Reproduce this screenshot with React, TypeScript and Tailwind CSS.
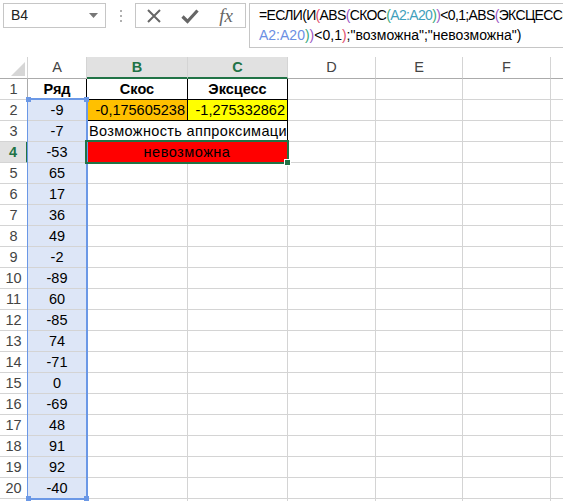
import React from "react";

const vals = [-9, -7, -53, 65, 17, 36, 49, -2, -89, 60, -85, 74, -71, 0, -69, 48, 91, 92, -40];

function RowHead({ n, active }: { n?: number; active?: boolean }) {
  return (
    <div
      className={
        "w-[28px] shrink-0 border-b border-b-[#d4d4d4] border-r text-center leading-[20px] " +
        (active
          ? "bg-[#e1e1e1] border-r-2 border-r-[#217346] text-[#217346] font-bold"
          : "border-r-[#ababab] text-[#444]")
      }
    >
      {n}
    </div>
  );
}

function Rest() {
  return (
    <>
      <div className="w-[88px] shrink-0 border-r border-b border-[#d4d4d4]" />
      <div className="w-[87px] shrink-0 border-r border-b border-[#d4d4d4]" />
      <div className="w-[88px] shrink-0 border-r border-b border-[#d4d4d4]" />
      <div className="flex-1 border-b border-[#d4d4d4]" />
    </>
  );
}

export default function App() {
  return (
    <div className="w-[563px] h-[501px] bg-white overflow-hidden relative font-['Liberation_Sans',Arial,sans-serif] text-[14.5px] text-black">
      {/* formula bar */}
      <div className="h-[57px] flex items-start pt-[3px] pl-[3px]">
        <div className="w-[103px] h-[25px] border border-[#c6c6c6] flex items-center justify-between pl-[7px] pr-[7px] text-[14px] text-[#222]">
          <span>B4</span>
          <svg width="9" height="5" viewBox="0 0 9 5">
            <path d="M0 0 L9 0 L4.5 5 Z" fill="#777" />
          </svg>
        </div>
        <div className="w-[29px] h-[25px] flex flex-col items-center justify-center gap-[3px]">
          <div className="w-[2px] h-[2px] bg-[#b0b0b0]" />
          <div className="w-[2px] h-[2px] bg-[#b0b0b0]" />
          <div className="w-[2px] h-[2px] bg-[#b0b0b0]" />
        </div>
        <div className="w-[111px] h-[25px] border border-[#c6c6c6] flex items-center">
          <div className="w-[36px] flex justify-center">
            <svg width="16" height="16" viewBox="0 0 16 16">
              <path d="M2 2 L14 14 M14 2 L2 14" stroke="#666" strokeWidth="2" />
            </svg>
          </div>
          <div className="w-[36px] flex justify-center">
            <svg width="18" height="16" viewBox="0 0 18 16">
              <path d="M1.5 8.5 L6.5 13.5 L16.5 2.5" stroke="#666" strokeWidth="3.2" fill="none" />
            </svg>
          </div>
          <div className="w-[36px] flex justify-center font-['Liberation_Serif',serif] italic text-[19px] text-[#666] leading-none">
            fx
          </div>
        </div>
        <div className="ml-[3px] flex-1 h-[45px] border border-r-0 border-[#c6c6c6] pl-[9px] pt-[1px] text-[14px] leading-[20px] whitespace-nowrap overflow-hidden">
          <div className="tracking-[-0.65px]">
            =ЕСЛИ(И<span className="text-[#e0506e]">(</span>ABS<span className="text-[#9b59c4]">(</span>СКОС
            <span className="text-[#3aa97a]">(</span>
            <span className="text-[#3f9fbc]">A2:A20</span>
            <span className="text-[#3aa97a]">)</span>
            <span className="text-[#9b59c4]">)</span>&lt;0,1;ABS<span className="text-[#9b59c4]">(</span>ЭКСЦЕСС
            <span className="text-[#3aa97a]">(</span>
          </div>
          <div>
            <span className="text-[#6b8fe3]">A2:A20</span>
            <span className="text-[#3aa97a]">)</span>
            <span className="text-[#9b59c4]">)</span>&lt;0,1<span className="text-[#e0506e]">)</span>;"возможна";"невозможна")
          </div>
        </div>
      </div>

      {/* column headers */}
      <div className="flex h-[22px] text-[#444]">
        <div className="w-[28px] shrink-0 border-r border-r-[#d4d4d4] border-b border-b-[#ababab] relative">
          <svg className="absolute right-[2px] bottom-[2px]" width="14" height="14" viewBox="0 0 14 14">
            <path d="M14 0 L14 14 L0 14 Z" fill="#d6d6d6" />
          </svg>
        </div>
        <div className="w-[59px] shrink-0 border-r border-r-[#d4d4d4] border-b border-b-[#ababab] text-center leading-[21px]">A</div>
        <div className="w-[101px] shrink-0 border-r border-r-[#d4d4d4] border-b-2 border-b-[#217346] bg-[#e1e1e1] text-center leading-[20px] text-[#217346] font-bold">B</div>
        <div className="w-[100px] shrink-0 border-r border-r-[#d4d4d4] border-b-2 border-b-[#217346] bg-[#e1e1e1] text-center leading-[20px] text-[#217346] font-bold">C</div>
        <div className="w-[88px] shrink-0 border-r border-r-[#d4d4d4] border-b border-b-[#ababab] text-center leading-[21px]">D</div>
        <div className="w-[87px] shrink-0 border-r border-r-[#d4d4d4] border-b border-b-[#ababab] text-center leading-[21px]">E</div>
        <div className="w-[88px] shrink-0 border-r border-r-[#d4d4d4] border-b border-b-[#ababab] text-center leading-[21px]">F</div>
        <div className="flex-1 border-b border-b-[#ababab]" />
      </div>

      {/* row 1 */}
      <div className="flex h-[21px]">
        <RowHead n={1} />
        <div className="w-[59px] shrink-0 border-r border-r-black border-b border-b-[#d4d4d4] text-center leading-[20px] font-bold">Ряд</div>
        <div className="w-[101px] shrink-0 border-r border-b border-black text-center leading-[20px] font-bold">Скос</div>
        <div className="w-[100px] shrink-0 border-r border-b border-black text-center leading-[20px] font-bold">Эксцесс</div>
        <Rest />
      </div>

      {/* rows 2..20 */}
      {vals.map((v, i) => {
        const r = i + 2;
        return (
          <div key={r} className="flex h-[21px]">
            <RowHead n={r} active={r === 4} />
            <div className="w-[59px] shrink-0 border-r border-b border-[#d4d4d4] bg-[#dde6f7] text-center leading-[20px]">{v}</div>
            {r === 2 ? (
              <>
                <div className="w-[101px] shrink-0 border-r border-b border-black bg-[#ffc000] text-right pr-[2px] leading-[20px]">-0,175605238</div>
                <div className="w-[100px] shrink-0 border-r border-b border-black bg-[#ffff00] text-right pr-[2px] leading-[20px]">-1,275332862</div>
              </>
            ) : r === 3 ? (
              <div className="w-[201px] shrink-0 border-r border-r-black border-b border-b-[#d4d4d4] pl-[2px] leading-[20px] whitespace-nowrap overflow-hidden tracking-[0.35px]">
                Возможность аппроксимации
              </div>
            ) : r === 4 ? (
              <div className="w-[201px] shrink-0 border-r border-b border-[#d4d4d4] bg-[#ff0000] text-center leading-[20px] tracking-[0.5px]">невозможна</div>
            ) : (
              <>
                <div className="w-[101px] shrink-0 border-r border-b border-[#d4d4d4]" />
                <div className="w-[100px] shrink-0 border-r border-b border-[#d4d4d4]" />
              </>
            )}
            <Rest />
          </div>
        );
      })}
      <div className="flex h-[21px]">
        <RowHead />
        <div className="w-[59px] shrink-0 border-r border-b border-[#d4d4d4]" />
        <div className="w-[101px] shrink-0 border-r border-b border-[#d4d4d4]" />
        <div className="w-[100px] shrink-0 border-r border-b border-[#d4d4d4]" />
        <Rest />
      </div>

      {/* reference highlight A2:A20 */}
      <div className="absolute left-[27px] top-[98px] w-[61px] h-[402px] border-2 border-l border-[#6b98e6] pointer-events-none" />
      <div className="absolute left-[26px] top-[97px] w-[5px] h-[5px] bg-[#6b98e6]" />
      <div className="absolute left-[84px] top-[97px] w-[5px] h-[5px] bg-[#6b98e6]" />
      <div className="absolute left-[26px] top-[496px] w-[5px] h-[5px] bg-[#6b98e6]" />
      <div className="absolute left-[84px] top-[496px] w-[5px] h-[5px] bg-[#6b98e6]" />

      {/* selection B4:C4 */}
      <div className="absolute left-[85px] top-[140px] w-[204px] h-[24px] border-2 border-[#217346] pointer-events-none" />
      <div className="absolute left-[284px] top-[159px] w-[7px] h-[7px] bg-[#217346] border border-white" />
    </div>
  );
}
